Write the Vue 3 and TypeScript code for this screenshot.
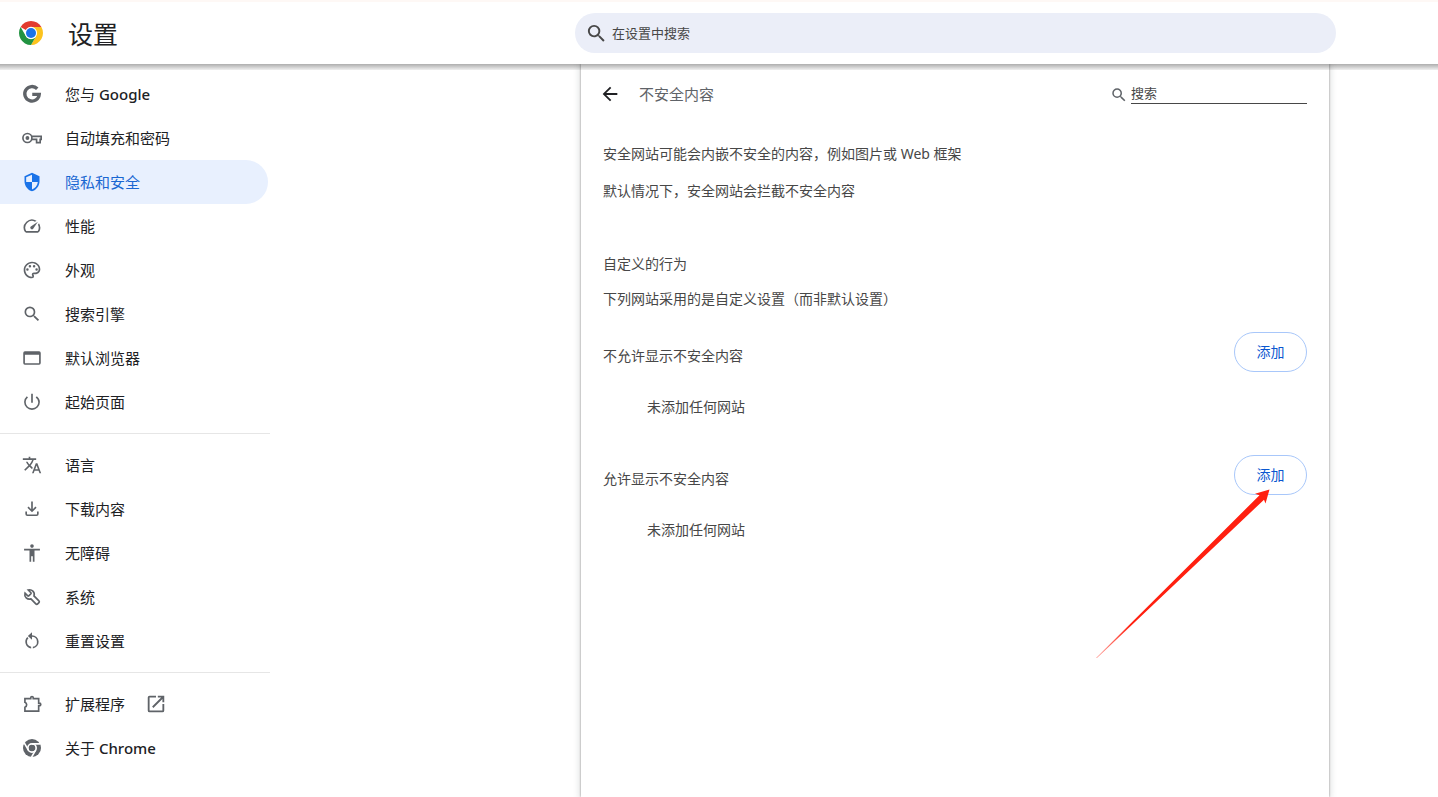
<script setup lang="ts">
import { ref } from 'vue'

interface MenuItem {
  label: string
  latin?: string
  icon: string
  external?: boolean
}

interface SiteList {
  id: string
  title: string
  pointed?: boolean
}

const icons: Record<string, string> = {
  shield: 'M12 1 3 5v6c0 5.550 3.840 10.740 9 12 5.160-1.260 9-6.450 9-12V5l-9-4zm0 10.990h7c-.530 4.120-3.280 7.790-7 8.940V12H5V6.300l7-3.110v8.800z',
  speed: 'M20.380 8.570l-1.230 1.850a8 8 0 0 1-.220 7.580H5.070A8 8 0 0 1 15.580 6.850l1.850-1.230A10 10 0 0 0 3.350 19a2 2 0 0 0 1.720 1h13.850a2 2 0 0 0 1.740-1 10 10 0 0 0-.270-10.440zm-9.790 6.840a2 2 0 0 0 2.830 0l5.660-8.490-8.490 5.660a2 2 0 0 0 0 2.830z',
  palette: 'M12 22C6.490 22 2 17.510 2 12S6.490 2 12 2s10 4.040 10 9c0 3.310-2.690 6-6 6h-1.770c-.280 0-.500.220-.500.500 0 .120.050.230.130.330.410.470.640 1.060.640 1.670A2.500 2.500 0 0 1 12 22zm0-18c-4.410 0-8 3.590-8 8s3.590 8 8 8c.280 0 .500-.220.500-.500a.540.540 0 0 0-.140-.350c-.410-.460-.630-1.050-.630-1.650a2.500 2.500 0 0 1 2.500-2.500H16c2.210 0 4-1.790 4-4 0-3.860-3.590-7-8-7zM6.500 10a1.500 1.500 0 1 0 0 3 1.500 1.500 0 0 0 0-3zm3-4a1.500 1.500 0 1 0 0 3 1.500 1.500 0 0 0 0-3zm5 0a1.500 1.500 0 1 0 0 3 1.500 1.500 0 0 0 0-3zm3 4a1.500 1.500 0 1 0 0 3 1.500 1.500 0 0 0 0-3z',
  search: 'M15.500 14h-.790l-.280-.270A6.471 6.471 0 0 0 16 9.500 6.500 6.500 0 1 0 9.500 16c1.610 0 3.090-.590 4.230-1.570l.270.280v.790l5 4.990L20.490 19l-4.990-5zm-6 0C7.010 14 5 11.990 5 9.500S7.010 5 9.500 5 14 7.010 14 9.500 11.990 14 9.500 14z',
  browser: 'M20.500 4h-17A2 2 0 0 0 1.500 6v12a2 2 0 0 0 2 2h17a2 2 0 0 0 2-2V6a2 2 0 0 0-2-2zm0 14.300h-17V8h17v10.300z',
  power: 'M13 2h-2v11h2V2zm4.830 3.170-1.420 1.420A6.920 6.920 0 0 1 19.500 12c0 4.100-3.360 7.500-7.500 7.500S4.500 16.100 4.500 12c0-2.190 1.050-4.140 2.690-5.410L5.770 5.170A9.300 9.300 0 0 0 2.500 12a9.500 9.500 0 0 0 19 0c0-2.740-1.730-5.180-3.670-6.830z',
  translate: 'M12.870 15.070l-2.540-2.510.030-.030A17.520 17.520 0 0 0 14.070 6H17V4h-7V2H8v2H1v1.990h11.170C11.500 7.920 10.440 9.750 9 11.350 8.070 10.320 7.300 9.190 6.690 8h-2c.730 1.630 1.730 3.170 2.980 4.560l-5.090 5.020L4 19l5-5 3.110 3.110.760-2.040zM18.500 10h-2L12 22h2l1.120-3h4.750L21 22h2l-4.500-12zm-2.620 7l1.620-4.330L19.120 17h-3.240z',
  download: 'M13 3h-2v9.200L7.900 9.100 6.500 10.500 12 16l5.500-5.500-1.400-1.400-3.100 3.100V3zM4 15v3a2.500 2.500 0 0 0 2.500 2.500h11A2.500 2.500 0 0 0 20 18v-3h-2v3a.5.5 0 0 1-.5.5h-11A.5.5 0 0 1 6 18v-3H4z',
  accessibility: 'M12 1.500a2.200 2.200 0 1 1 0 4.400 2.200 2.200 0 0 1 0-4.400zM21.500 9H15v13.500h-2V16h-2v6.500H9V9H2.500V7h19v2z',
  reset: 'M12 5V1.500L7 6l5 4.500V7a6 6 0 0 1 1 11.900v2.030A8 8 0 0 0 12 5zm-6 8c0-1.650.670-3.150 1.760-4.240L6.340 7.340A8 8 0 0 0 11 20.930V18.900A6 6 0 0 1 6 13z',
  open: 'M19 19H5V5h7V3H5a2 2 0 0 0-2 2v14a2 2 0 0 0 2 2h14a2 2 0 0 0 2-2v-7h-2v7zM14 3v2h3.590l-9.830 9.830 1.410 1.410L19 6.410V10h2V3h-7z',
  back: 'M20 11H7.830l5.590-5.590L12 4l-8 8 8 8 1.410-1.410L7.830 13H20v-2z',
}

const outlines: Record<string, string> = {
  wrench: 'M10.700 14.300l5.900 6a1.500 1.500 0 0 0 2.200 0l1.500-1.500a1.500 1.500 0 0 0 0-2.200l-5.900-5.900A5.600 5.600 0 0 0 7.400 3.600l3.300 3.300a1 1 0 0 1 0 1.200l-2.600 2.600a1 1 0 0 1-1.200 0L3.600 7.400a5.600 5.600 0 0 0 7.100 6.900z',
  extension: 'M10.500 4.500a1.500 1.500 0 0 1 3 0V5.500H20V11h1a1.500 1.500 0 0 1 0 3h-1v6.500H3.500v-4.500a3.200 3.200 0 0 0 0-6V5.500h7V4.500z',
}

const groups: MenuItem[][] = [
  [
    { label: '您与', latin: 'Google', icon: 'google' },
    { label: '自动填充和密码', icon: 'key' },
    { label: '隐私和安全', icon: 'shield' },
    { label: '性能', icon: 'speed' },
    { label: '外观', icon: 'palette' },
    { label: '搜索引擎', icon: 'search' },
    { label: '默认浏览器', icon: 'browser' },
    { label: '起始页面', icon: 'power' },
  ],
  [
    { label: '语言', icon: 'translate' },
    { label: '下载内容', icon: 'download' },
    { label: '无障碍', icon: 'accessibility' },
    { label: '系统', icon: 'wrench' },
    { label: '重置设置', icon: 'reset' },
  ],
  [
    { label: '扩展程序', icon: 'extension', external: true },
    { label: '关于', latin: 'Chrome', icon: 'chrome' },
  ],
]

const siteLists: SiteList[] = [
  { id: 'block', title: '不允许显示不安全内容' },
  { id: 'allow', title: '允许显示不安全内容', pointed: true },
]

const active = ref('shield')
const query = ref('')
const siteQuery = ref('')
</script>

<template>
  <div class="page">
    <header class="topbar">
      <div class="brand">
        <svg class="logo" viewBox="0 0 48 48" aria-hidden="true">
          <path fill="#e33b2e" d="M24 24 3.220 12A24 24 0 0 1 44.780 12z" />
          <path fill="#fcc31e" d="M24 12H44.780A24 24 0 0 1 24 48L34.390 30z" />
          <path fill="#229342" d="M24 48A24 24 0 0 1 3.220 12L13.610 30A12 12 0 0 0 34.390 30z" />
          <circle cx="24" cy="24" r="12.300" fill="#fff" />
          <circle cx="24" cy="24" r="10" fill="#1a73e8" />
        </svg>
        <h1>设置</h1>
      </div>
      <label class="search">
        <svg class="search-icon" viewBox="0 0 24 24" aria-hidden="true"><path :d="icons.search" /></svg>
        <input v-model="query" type="text" placeholder="在设置中搜索" aria-label="在设置中搜索" />
      </label>
    </header>

    <div class="body">
      <nav class="menu">
        <ul v-for="(group, g) in groups" :key="g" class="group">
          <li v-for="item in group" :key="item.icon">
            <a href="#" class="item" :class="{ active: item.icon === active }" @click.prevent="active = item.icon">
              <svg v-if="item.icon === 'google'" class="icon" viewBox="0 0 24 24" aria-hidden="true">
                <path class="ring" d="M18.300 5.700A8.700 8.700 0 1 0 20.700 12.500H12.300" />
              </svg>
              <svg v-else-if="item.icon === 'key'" class="icon" viewBox="0 0 24 24" aria-hidden="true">
                <circle class="outline" cx="6.500" cy="12" r="5.400" />
                <circle cx="6.500" cy="12" r="2.300" />
                <path class="outline" d="M11.800 10H23v3.600h-1.200v3.900h-4.300v-3.900h-5.700" />
              </svg>
              <svg v-else-if="item.icon === 'chrome'" class="icon" viewBox="0 0 24 24" aria-hidden="true">
                <circle cx="12" cy="12" r="10.800" />
                <circle class="gap" cx="12" cy="12" r="5" />
                <path class="gap" d="M12 7H22M7.670 14.500 2.670 5.840M16.330 14.500 11.330 23.160" />
                <circle cx="12" cy="12" r="3.600" />
              </svg>
              <svg v-else-if="outlines[item.icon]" class="icon" viewBox="0 0 24 24" aria-hidden="true">
                <path class="outline" :d="outlines[item.icon]" />
              </svg>
              <svg v-else class="icon" viewBox="0 0 24 24" aria-hidden="true"><path :d="icons[item.icon]" /></svg>
              <span>{{ item.label }}<b v-if="item.latin">&nbsp;{{ item.latin }}</b></span>
              <svg v-if="item.external" class="external" viewBox="0 0 24 24" aria-hidden="true"><path :d="icons.open" /></svg>
            </a>
          </li>
        </ul>
      </nav>

      <main class="card">
        <div class="card-head">
          <button class="back" type="button" aria-label="返回">
            <svg viewBox="0 0 24 24" aria-hidden="true"><path :d="icons.back" /></svg>
          </button>
          <h2>不安全内容</h2>
          <label class="filter">
            <svg viewBox="0 0 24 24" aria-hidden="true"><path :d="icons.search" /></svg>
            <input v-model="siteQuery" type="text" placeholder="搜索" aria-label="搜索" />
          </label>
        </div>

        <div class="intro">
          <p>安全网站可能会内嵌不安全的内容，例如图片或 Web 框架</p>
          <p>默认情况下，安全网站会拦截不安全内容</p>
        </div>

        <div class="custom">
          <h3>自定义的行为</h3>
          <p>下列网站采用的是自定义设置（而非默认设置）</p>
        </div>

        <section v-for="list in siteLists" :key="list.id" class="sites">
          <div class="sites-head">
            <h3>{{ list.title }}</h3>
            <div class="action">
              <button class="add" type="button">添加</button>
              <svg v-if="list.pointed" class="pointer" viewBox="0 0 180 180" aria-hidden="true">
                <defs>
                  <linearGradient id="fade" x1="0" y1="1" x2="1" y2="0">
                    <stop offset="0" stop-color="#ff2010" stop-opacity="0.400" />
                    <stop offset="0.200" stop-color="#ff2010" />
                  </linearGradient>
                </defs>
                <path fill="url(#fade)" d="M2 173 165.500 10.200 161 8.700 175.500 4.500 171.500 18.500 170 14.700 3 173z" />
              </svg>
            </div>
          </div>
          <p class="empty">未添加任何网站</p>
        </section>
      </main>
    </div>
  </div>
</template>

<style>
body {
  margin: 0;
  background: #fff;
}
</style>

<style scoped>
.page {
  display: flex;
  flex-direction: column;
  min-height: 100vh;
  color: #202124;
  font-family: "Noto Sans", "Noto Sans CJK SC", sans-serif;
  font-size: 14px;
  line-height: 20px;
}

h1, h2, h3, p, ul {
  margin: 0;
  padding: 0;
  font-weight: 400;
}

h3 {
  font-size: 14px;
}

svg {
  flex: none;
  fill: currentColor;
}

input, button {
  font: inherit;
  color: inherit;
  border: 0;
  padding: 0;
  background: none;
}

input {
  min-width: 0;
  outline: 0;
}

input::placeholder {
  color: #474747;
  opacity: 1;
}

.topbar {
  position: relative;
  z-index: 1;
  box-sizing: border-box;
  display: grid;
  grid-template-columns: 575fr 761fr 102fr;
  align-items: center;
  height: 64px;
  border-top: 2px solid #fef8f5;
  background: #fff;
}

.topbar::after {
  content: "";
  position: absolute;
  top: 100%;
  left: 0;
  right: 0;
  height: 6px;
  background: linear-gradient(rgba(0, 0, 0, 0.32), rgba(0, 0, 0, 0.06));
}

.brand {
  display: flex;
  align-items: center;
  gap: 25px;
  padding-left: 19px;
}

.logo {
  width: 24px;
  height: 24px;
}

h1 {
  padding-top: 2px;
  font-size: 25px;
  line-height: 32px;
}

.search {
  box-sizing: border-box;
  display: flex;
  align-items: center;
  gap: 4px;
  height: 40px;
  padding: 0 20px 0 10px;
  border-radius: 20px;
  background: #ebeef8;
  color: #474747;
  font-size: 13px;
}

.search-icon {
  width: 23px;
  height: 23px;
}

.search input {
  flex: 1;
}

.body {
  flex: 1;
  display: grid;
  grid-template-columns: 270px 311fr 748fr 109fr;
}

.menu {
  padding-top: 8px;
}

.group {
  list-style: none;
}

.group + .group {
  margin-top: 9px;
  padding-top: 9px;
  border-top: 1px solid #e6e6e6;
}

.item {
  display: flex;
  align-items: center;
  gap: 23px;
  height: 44px;
  margin-right: 2px;
  padding-left: 22px;
  border-radius: 0 22px 22px 0;
  color: #202124;
  font-size: 15px;
  text-decoration: none;
}

.item b {
  font-weight: 500;
}

.item.active {
  background: #e8f0fe;
  color: #1967d2;
}

.icon {
  width: 20px;
  height: 20px;
  color: #5f6368;
}

.active .icon {
  color: #1a73e8;
}

.ring {
  fill: none;
  stroke: currentColor;
  stroke-width: 4;
}

.outline {
  fill: none;
  stroke: currentColor;
  stroke-width: 2;
}

.gap {
  fill: none;
  stroke: #fff;
  stroke-width: 2;
}

.external {
  width: 22px;
  height: 22px;
  margin-left: -3px;
  color: #5f6368;
}

.card {
  grid-column: 3;
  box-sizing: border-box;
  padding: 10px 22px 0;
  color: #474747;
  box-shadow: 0 0 2px rgba(0, 0, 0, 0.4), 0 0 6px 2px rgba(60, 64, 67, 0.15);
}

.card-head {
  display: flex;
  align-items: center;
  height: 40px;
}

.back {
  display: flex;
  margin-left: -4px;
  color: #202124;
}

.back svg {
  width: 22px;
  height: 22px;
}

h2 {
  flex: 1;
  margin-left: 18px;
  color: #5f6368;
  font-size: 15px;
}

.filter {
  display: flex;
  align-items: flex-end;
  gap: 3px;
  padding-bottom: 2px;
  color: #5f6368;
  font-size: 13px;
}

.filter svg {
  width: 18px;
  height: 18px;
}

.filter input {
  width: 176px;
  height: 20px;
  border-bottom: 1px solid #474747;
}

.intro {
  display: grid;
  gap: 17px;
  padding-top: 30px;
}

.custom {
  display: grid;
  gap: 15px;
  padding: 53px 0 23px;
}

.sites {
  padding-bottom: 38px;
}

.sites-head {
  display: flex;
  align-items: center;
  justify-content: space-between;
}

.sites-head h3 {
  padding-top: 8px;
}

.action {
  position: relative;
}

.add {
  box-sizing: border-box;
  display: block;
  width: 73px;
  height: 40px;
  border: 1px solid #a8c7fa;
  border-radius: 20px;
  color: #0b57d0;
}

.pointer {
  position: absolute;
  top: 30px;
  right: 33px;
  width: 180px;
  height: 180px;
  pointer-events: none;
}

.empty {
  padding: 25px 0 0 44px;
}
</style>
